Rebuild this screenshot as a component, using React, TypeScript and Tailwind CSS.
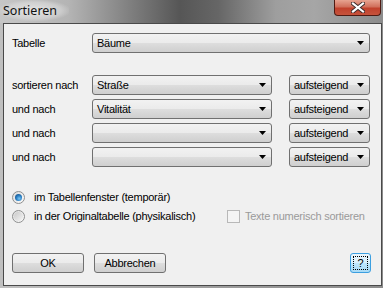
import React from "react";

const font = { fontFamily: '"Liberation Sans", Arial, sans-serif' };

function Arrow() {
  return (
    <svg width="7" height="4" viewBox="0 0 7 4" className="shrink-0">
      <polygon points="0,0 7,0 3.5,4" fill="#000" />
    </svg>
  );
}

function Combo({ text, className }: { text: string; className: string }) {
  return (
    <div
      className={`h-[20px] flex items-center justify-between pl-[4px] pr-[5px] rounded-[3px] border border-[#707070] bg-[linear-gradient(to_bottom,#f2f2f2_0%,#ebebeb_48%,#dddddd_52%,#cfcfcf_100%)] text-[11px] tracking-[-0.25px] text-black ${className}`}
    >
      <span className="leading-none">{text}</span>
      <Arrow />
    </div>
  );
}

function Btn({ children, className }: { children: React.ReactNode; className: string }) {
  return (
    <div
      className={`h-[20px] flex items-center justify-center rounded-[3px] border border-[#707070] bg-[linear-gradient(to_bottom,#f2f2f2_0%,#ebebeb_48%,#dddddd_52%,#cfcfcf_100%)] text-[11px] tracking-[-0.25px] text-black ${className}`}
    >
      {children}
    </div>
  );
}

function SortRow({ label, value }: { label: string; value: string }) {
  return (
    <div className="flex items-center h-[20px]">
      <div className="w-[80px] text-[11px] tracking-[-0.25px]">{label}</div>
      <Combo text={value} className="w-[180px]" />
      <Combo text="aufsteigend" className="w-[81px] ml-[17px]" />
    </div>
  );
}

function Radio({ checked }: { checked: boolean }) {
  return (
    <div className="w-[13px] h-[13px] rounded-full border border-[#8e8f8f] bg-[linear-gradient(135deg,#dcdcdc,#fbfbfb)] flex items-center justify-center shrink-0">
      {checked ? (
        <div className="w-[7px] h-[7px] rounded-full bg-[radial-gradient(circle_at_60%_65%,#79c7f5_0%,#2a7fc4_45%,#0d3f72_100%)]" />
      ) : (
        <div className="w-[9px] h-[9px] rounded-full bg-[linear-gradient(135deg,#c9c9c9,#f4f4f4)]" />
      )}
    </div>
  );
}

export default function App() {
  return (
    <div
      style={font}
      className="w-[383px] h-[288px] flex flex-col bg-[#9c9c9c] overflow-hidden"
    >
      {/* title bar */}
      <div className="h-[23px] flex justify-between bg-[linear-gradient(to_right,#c6c6c6_0%,#b4b4b4_18%,#7c7c7c_35%,#565656_47%,#666666_57%,#9e9e9e_72%,#a6a6a6_82%,#8c8c8c_100%)] shrink-0">
        <div
          className="pl-[3px] pt-[2px] text-[12.5px] text-[#111] h-[21px] flex items-center bg-[radial-gradient(ellipse_at_center,rgba(235,235,235,0.85)_0%,rgba(235,235,235,0.4)_55%,rgba(235,235,235,0)_75%)] pr-[12px]"
          style={{ fontFamily: '"Segoe UI", "Noto Sans", sans-serif' }}
        >
          Sortieren
        </div>
        <div className="mr-[2px] w-[47px] h-[16px] rounded-b-[4px] border border-t-0 border-[#4f1a12] bg-[linear-gradient(to_bottom,#e7a391_0%,#d1705c_45%,#c1412c_55%,#c6533c_100%)] flex items-center justify-center">
          <svg width="14" height="11" viewBox="0 0 14 11">
            <path d="M2 1.5 L12 9.5 M12 1.5 L2 9.5" stroke="#3a2a2a" strokeWidth="4" strokeLinecap="square" />
            <path d="M2 1.5 L12 9.5 M12 1.5 L2 9.5" stroke="#ffffff" strokeWidth="2.2" strokeLinecap="square" />
          </svg>
        </div>
      </div>

      {/* client */}
      <div className="flex-1 pl-[3px] pr-[1px] pb-[2px] bg-[linear-gradient(to_right,#c0c0c0,#a0a0a0_50%,#8c8c8c)]">
        <div className="h-full border border-[#4a4a4a] bg-[#f0f0f0] pl-[8px] pr-[10px] pt-[9px] flex flex-col text-black">
          <div className="flex items-center h-[20px]">
            <div className="w-[80px] text-[11px] tracking-[-0.25px]">Tabelle</div>
            <Combo text="Bäume" className="w-[278px]" />
          </div>

          <div className="mt-[22px] flex flex-col gap-[4px]">
            <SortRow label="sortieren nach" value="Straße" />
            <SortRow label="und nach" value="Vitalität" />
            <SortRow label="und nach" value="" />
            <SortRow label="und nach" value="" />
          </div>

          <div className="mt-[22px] flex items-center h-[16px] text-[11px] tracking-[-0.25px]">
            <Radio checked />
            <span className="ml-[9px]">im Tabellenfenster (temporär)</span>
          </div>
          <div className="mt-[3px] flex items-center h-[16px] text-[11px] tracking-[-0.25px]">
            <Radio checked={false} />
            <span className="ml-[9px] w-[193px]">in der Originaltabelle (physikalisch)</span>
            <div className="w-[13px] h-[13px] border border-[#b8b8b8] bg-[#f4f4f4]" />
            <span className="ml-[5px] text-[#9a9a9a]">Texte numerisch sortieren</span>
          </div>

          <div className="mt-[29px] flex items-center">
            <Btn className="w-[72px]">OK</Btn>
            <Btn className="w-[72px] ml-[10px]">Abbrechen</Btn>
            <div className="ml-auto w-[21px] h-[20px] rounded-[3px] border border-[#3c9fe0] bg-[linear-gradient(to_bottom,#eaf6fd_0%,#d9f0fc_48%,#bee6fd_52%,#a7d9f5_100%)] p-[2px]">
              <div className="w-full h-full border border-dotted border-black flex items-center justify-center text-[11px] leading-none">
                ?
              </div>
            </div>
          </div>
        </div>
      </div>
    </div>
  );
}
